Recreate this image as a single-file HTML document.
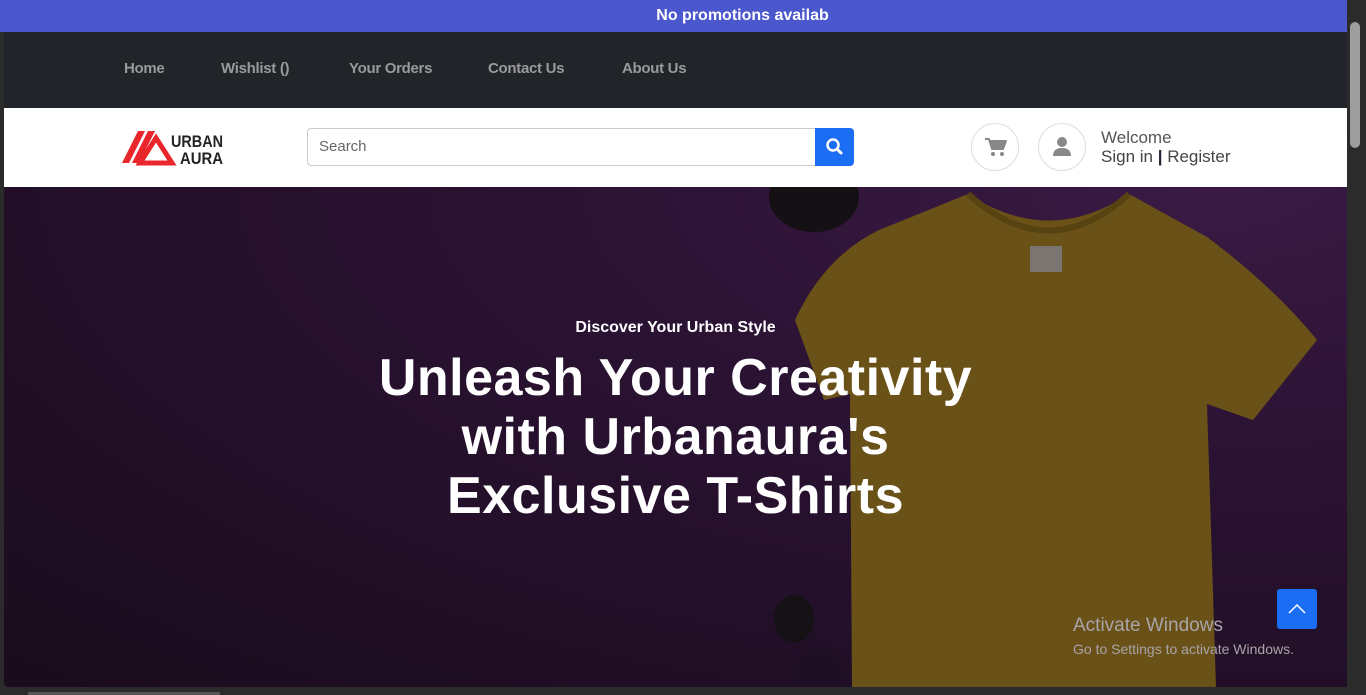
<!DOCTYPE html>
<html><head><meta charset="utf-8"><style>
*{margin:0;padding:0;box-sizing:border-box}
body{width:1366px;height:695px;overflow:hidden;background:#2b2b2b;font-family:"Liberation Sans",sans-serif;position:relative}
.abs{position:absolute}
.top{left:0;top:0;width:1347px;height:32px;background:#4b57cc;color:#fff;font-weight:bold;font-size:16px;text-align:center;line-height:31px;padding-left:138px}
.nav{left:4px;top:32px;width:1343px;height:76px;background:#212529}
.nav span{position:absolute;top:28px;color:#9a9a9a;font-weight:bold;font-size:15px;letter-spacing:-0.3px}
.hdr{left:4px;top:108px;width:1343px;height:79px;background:#fff}
.search{left:307px;top:128px;width:509px;height:38px;border:1px solid #ccc;border-radius:4px 0 0 4px;color:#666;font-size:15px;padding:9px 11px}
.sbtn{left:815px;top:128px;width:39px;height:38px;background:#1b6ef3;border-radius:0 4px 4px 0}
.circ{width:48px;height:48px;border:1px solid #ddd;border-radius:50%;top:123px}
.hero{left:4px;top:187px;width:1343px;height:500px;overflow:hidden;border-bottom-left-radius:4px;background:radial-gradient(ellipse at 90% 0%,#3a1a44 0%,#2a1232 40%,#1a0c1c 100%)}
.h{color:#fff;font-weight:bold;text-align:center;position:absolute;width:100%;left:0}
</style></head><body>
<div class="abs top">No promotions availab</div>
<div class="abs nav">
<span style="left:120px">Home</span><span style="left:217px">Wishlist ()</span><span style="left:345px">Your Orders</span><span style="left:484px">Contact Us</span><span style="left:618px">About Us</span>
</div>
<div class="abs hdr"></div>
<svg class="abs" style="left:120px;top:128px" width="110" height="38" viewBox="0 0 110 38">
<polygon points="2,35 18,3 25,3 9,35" fill="#e8262b"/><polygon points="12,35 28,3 35,3 19,35" fill="#e8262b"/>
<polygon points="20,35 36,10 52,35" fill="none" stroke="#e8262b" stroke-width="5"/>
<text x="51" y="19" font-family="Liberation Sans Narrow, Liberation Sans" font-weight="bold" font-size="17" fill="#222" textLength="52" lengthAdjust="spacingAndGlyphs">URBAN</text>
<text x="60" y="36" font-family="Liberation Sans Narrow, Liberation Sans" font-weight="bold" font-size="17" fill="#222" textLength="43" lengthAdjust="spacingAndGlyphs">AURA</text>
</svg>
<div class="abs search">Search</div>
<div class="abs sbtn"><svg width="39" height="38"><circle cx="18" cy="17" r="5.5" stroke="#fff" stroke-width="2.5" fill="none"/><line x1="22" y1="21" x2="26" y2="25" stroke="#fff" stroke-width="3" stroke-linecap="round"/></svg></div>
<div class="abs circ" style="left:971px"><svg width="46" height="46"><path d="M13 15h4l3 10h11l3-8H18" fill="#888" stroke="#888" stroke-width="2" stroke-linejoin="round"/><circle cx="21" cy="30" r="2" fill="#888"/><circle cx="30" cy="30" r="2" fill="#888"/></svg></div>
<div class="abs circ" style="left:1038px"><svg width="46" height="46"><circle cx="23" cy="18" r="5" fill="#888"/><path d="M14 32q0-8 9-8t9 8z" fill="#888"/></svg></div>
<div class="abs" style="left:1101px;top:128px;font-size:17px;color:#555;line-height:19px">Welcome<br><span style="color:#444">Sign in <b style="color:#223">|</b> Register</span></div>
<div class="abs hero">
<svg class="abs" style="left:0;top:0" width="1343" height="500">
<ellipse cx="810" cy="10" rx="45" ry="35" fill="#141014"/>
<ellipse cx="790" cy="432" rx="20" ry="24" fill="#151215"/>
<ellipse cx="815" cy="485" rx="25" ry="22" fill="#1e0f24"/>
<path d="M875 43 L964 7 Q1045 60 1125 7 L1203 50 Q1270 100 1313 153 L1249 233 L1203 217 L1212 500 L848 500 L846 207 L820 213 L791 133 Q820 70 875 43Z" fill="#6a5118"/>
<path d="M964 7 Q1045 80 1125 7" fill="none" stroke="#574212" stroke-width="6"/>
<rect x="1026" y="59" width="32" height="26" fill="#7a7570"/>
</svg>
<div class="h" style="top:132px;font-size:16px;">Discover Your Urban Style</div>
<div class="h" style="top:162px;font-size:52px;line-height:59px;letter-spacing:0.5px">Unleash Your Creativity<br>with Urbanaura's<br>Exclusive T-Shirts</div>
<div class="abs" style="left:1069px;top:428px;color:#a9a4a8;font-size:19px">Activate Windows</div>
<div class="abs" style="left:1069px;top:454px;color:#a9a4a8;font-size:14px">Go to Settings to activate Windows.</div>
<div class="abs" style="left:1273px;top:402px;width:40px;height:40px;background:#1b6ef3;border-radius:3px"><svg width="40" height="40"><path d="M12 24l8-8 8 8" stroke="#fff" stroke-width="1.5" fill="none"/></svg></div>
</div>
<div class="abs" style="left:1350px;top:22px;width:10px;height:126px;background:#9e9e9e;border-radius:5px"></div>
<div class="abs" style="left:28px;top:692px;width:192px;height:3px;background:#555"></div>
</body></html>
